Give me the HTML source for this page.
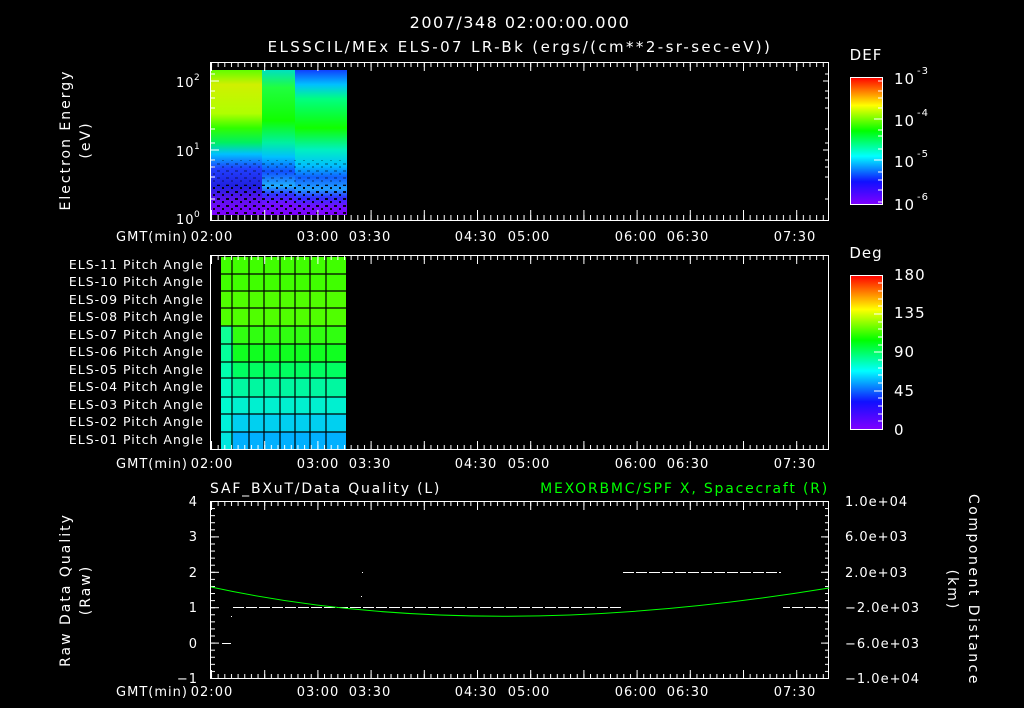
<!DOCTYPE html>
<html><head><meta charset="utf-8"><style>
html,body{margin:0;padding:0;background:#000;width:1024px;height:708px;overflow:hidden}
svg{display:block}
text{font-family:"DejaVu Sans","Liberation Sans",sans-serif;fill:#fff;letter-spacing:1px}
</style></head><body>
<svg width="1024" height="708" viewBox="0 0 1024 708" xmlns="http://www.w3.org/2000/svg">
<defs>
<linearGradient id="cb" x1="0" y1="1" x2="0" y2="0">
<stop offset="0" stop-color="#8000ff"/><stop offset="0.18" stop-color="#1010ff"/><stop offset="0.38" stop-color="#00ffff"/><stop offset="0.58" stop-color="#00ff00"/><stop offset="0.78" stop-color="#ffff00"/><stop offset="1" stop-color="#ff0000"/>
</linearGradient>
<linearGradient id="spA" x1="0" y1="0" x2="0" y2="1">
<stop offset="0" stop-color="#60ff00"/><stop offset="0.1" stop-color="#d0f000"/><stop offset="0.3" stop-color="#b0ff00"/><stop offset="0.4" stop-color="#30ff00"/><stop offset="0.5" stop-color="#00f060"/><stop offset="0.58" stop-color="#00c0ff"/><stop offset="0.68" stop-color="#2040ff"/><stop offset="0.8" stop-color="#2020e0"/><stop offset="0.9" stop-color="#6010f0"/><stop offset="1" stop-color="#8000ff"/>
</linearGradient>
<linearGradient id="spB" x1="0" y1="0" x2="0" y2="1">
<stop offset="0" stop-color="#00e0c0"/><stop offset="0.12" stop-color="#20ff40"/><stop offset="0.35" stop-color="#10ff00"/><stop offset="0.5" stop-color="#00f0a0"/><stop offset="0.6" stop-color="#00c0ff"/><stop offset="0.7" stop-color="#1050ff"/><stop offset="0.8" stop-color="#20b0ff"/><stop offset="0.86" stop-color="#3030ff"/><stop offset="0.92" stop-color="#7010ff"/><stop offset="1" stop-color="#8000ff"/>
</linearGradient>
<linearGradient id="spC" x1="0" y1="0" x2="0" y2="1">
<stop offset="0" stop-color="#1040ff"/><stop offset="0.1" stop-color="#00c0ff"/><stop offset="0.2" stop-color="#00ff80"/><stop offset="0.4" stop-color="#10ff00"/><stop offset="0.55" stop-color="#00f0c0"/><stop offset="0.66" stop-color="#00c0ff"/><stop offset="0.74" stop-color="#1060ff"/><stop offset="0.82" stop-color="#20a0ff"/><stop offset="0.88" stop-color="#3030ff"/><stop offset="0.94" stop-color="#7010ff"/><stop offset="1" stop-color="#8000ff"/>
</linearGradient>
<pattern id="tk" x="211" y="0" width="6.65" height="10" patternUnits="userSpaceOnUse"><rect x="0" y="0" width="1" height="10" fill="#fff"/></pattern>
<pattern id="tkM" x="211" y="0" width="53.2" height="10" patternUnits="userSpaceOnUse"><rect x="0" y="0" width="1" height="10" fill="#fff"/></pattern>
<pattern id="ty" x="0" y="501" width="10" height="7.08" patternUnits="userSpaceOnUse"><rect x="0" y="0" width="10" height="1" fill="#fff"/></pattern>
<pattern id="tyM" x="0" y="501" width="10" height="35.4" patternUnits="userSpaceOnUse"><rect x="0" y="0" width="10" height="1" fill="#fff"/></pattern>
<pattern id="ck" x="0" y="0" width="9" height="7" patternUnits="userSpaceOnUse"><rect x="1" y="2" width="3" height="2" fill="#000"/><rect x="6" y="5" width="2" height="2" fill="#000"/></pattern>
<pattern id="dash" x="233" y="0" width="13" height="1000" patternUnits="userSpaceOnUse"><rect x="0" y="0" width="11" height="1000" fill="#fff"/></pattern>
</defs>

<text x="520" y="28" font-size="16" text-anchor="middle" style="letter-spacing:1.5px">2007/348 02:00:00.000</text>
<text x="520" y="52" font-size="15" text-anchor="middle" style="letter-spacing:2.4px">ELSSCIL/MEx ELS-07 LR-Bk  (ergs/(cm**2-sr-sec-eV))</text>

<!-- Top panel -->
<rect x="211" y="70" width="51" height="145" fill="url(#spA)"/>
<rect x="262" y="70" width="33" height="145" fill="url(#spB)"/>
<rect x="295" y="70" width="52" height="145" fill="url(#spC)"/>
<rect x="211" y="185" width="136" height="30" fill="url(#ck)" opacity="0.9"/>
<rect x="211" y="160" width="136" height="25" fill="url(#ck)" opacity="0.3"/>
<rect x="210.5" y="62.5" width="618" height="158" fill="none" stroke="#fff"/>
<rect x="211" y="63" width="618" height="4" fill="url(#tk)"/>
<rect x="211" y="63" width="618" height="8" fill="url(#tkM)"/>
<rect x="211" y="215" width="618" height="5" fill="url(#tk)"/>
<rect x="211" y="210" width="618" height="10" fill="url(#tkM)"/>
<g stroke="#fff">
<path d="M211 81H219M211 150H219M823 81H829M823 150H829"/>
<path d="M211 91H215M211 98H215M211 108H215M211 129H215M211 160H215M211 167H215M211 177H215M211 199H215M211 74H215M211 143H215"/>
<path d="M825 91H829M825 98H829M825 108H829M825 129H829M825 160H829M825 167H829M825 177H829M825 199H829M825 74H829M825 143H829"/>
</g>
<text x="176" y="87" font-size="13">10</text><text x="194" y="80" font-size="9">2</text>
<text x="176" y="156" font-size="13">10</text><text x="194" y="149" font-size="9">1</text>
<text x="176" y="224" font-size="13">10</text><text x="194" y="217" font-size="9">0</text>
<text transform="translate(70,140) rotate(-90)" font-size="14" text-anchor="middle" style="letter-spacing:2px">Electron Energy</text>
<text transform="translate(90,140) rotate(-90)" font-size="14" text-anchor="middle" style="letter-spacing:2px">(eV)</text>

<g font-size="13" text-anchor="middle" style="letter-spacing:1.5px">
<text x="152" y="241">GMT(min)</text><text x="212" y="241">02:00</text><text x="318" y="241">03:00</text><text x="370" y="241">03:30</text><text x="476" y="241">04:30</text><text x="529" y="241">05:00</text><text x="636" y="241">06:00</text><text x="688" y="241">06:30</text><text x="795" y="241">07:30</text>
<text x="152" y="468">GMT(min)</text><text x="212" y="468">02:00</text><text x="318" y="468">03:00</text><text x="370" y="468">03:30</text><text x="476" y="468">04:30</text><text x="529" y="468">05:00</text><text x="636" y="468">06:00</text><text x="688" y="468">06:30</text><text x="795" y="468">07:30</text>
<text x="152" y="696">GMT(min)</text><text x="212" y="696">02:00</text><text x="318" y="696">03:00</text><text x="370" y="696">03:30</text><text x="476" y="696">04:30</text><text x="529" y="696">05:00</text><text x="636" y="696">06:00</text><text x="688" y="696">06:30</text><text x="795" y="696">07:30</text>
</g>

<!-- DEF colorbar -->
<text x="866" y="60" font-size="15" text-anchor="middle">DEF</text>
<rect x="850.5" y="77.5" width="32" height="127" fill="url(#cb)" stroke="#fff"/>
<g stroke="#fff"><path d="M878 81H882M878 91H882M878 98H882M878 108H882M874 119H882M878 130H882M878 136H882M878 149H882M874 160H882M878 172H882M878 180H882M878 190H882M878 202H882"/></g>
<g font-size="15"><text x="894" y="84">10</text><text x="917" y="74" font-size="10">-3</text>
<text x="894" y="126">10</text><text x="917" y="116" font-size="10">-4</text>
<text x="894" y="167">10</text><text x="917" y="157" font-size="10">-5</text>
<text x="894" y="210">10</text><text x="917" y="200" font-size="10">-6</text></g>

<!-- Middle panel -->
<g>
<rect x="221" y="257" width="125" height="192" fill="#40ff00"/>
<rect x="221" y="257" width="125" height="17" fill="#40ff00"/>
<rect x="221" y="274" width="125" height="17" fill="#40ff00"/>
<rect x="221" y="291" width="125" height="17" fill="#50ff00"/>
<rect x="221" y="308" width="125" height="18" fill="#50ff00"/>
<rect x="221" y="326" width="125" height="18" fill="#30ff10"/>
<rect x="221" y="344" width="125" height="18" fill="#10ff20"/>
<rect x="221" y="362" width="125" height="16" fill="#00ff60"/>
<rect x="221" y="378" width="125" height="19" fill="#00f8a0"/>
<rect x="221" y="397" width="125" height="17" fill="#00f0d0"/>
<rect x="221" y="414" width="125" height="18" fill="#00d0f0"/>
<rect x="221" y="432" width="125" height="17" fill="#00b0ff"/>
<rect x="221" y="326" width="12" height="123" fill="#00ffd0" opacity="0.7"/>
<g stroke="#000" stroke-width="1.2">
<path d="M232 257V449M249 257V449M264 257V449M280 257V449M295 257V449M310 257V449M326 257V449"/>
<path d="M221 274H346M221 291H346M221 308H346M221 326H346M221 344H346M221 362H346M221 378H346M221 397H346M221 414H346M221 432H346"/>
</g>
</g>
<rect x="210.5" y="255.5" width="618" height="194" fill="none" stroke="#fff"/>
<rect x="211" y="256" width="618" height="4" fill="url(#tk)"/>
<rect x="211" y="256" width="618" height="8" fill="url(#tkM)"/>
<rect x="211" y="445" width="618" height="4" fill="url(#tk)"/>
<rect x="211" y="441" width="618" height="8" fill="url(#tkM)"/>
<g font-size="12.5" text-anchor="end" style="letter-spacing:1.3px">
<text x="204" y="269">ELS-11 Pitch Angle</text>
<text x="204" y="286">ELS-10 Pitch Angle</text>
<text x="204" y="304">ELS-09 Pitch Angle</text>
<text x="204" y="321">ELS-08 Pitch Angle</text>
<text x="204" y="339">ELS-07 Pitch Angle</text>
<text x="204" y="356">ELS-06 Pitch Angle</text>
<text x="204" y="374">ELS-05 Pitch Angle</text>
<text x="204" y="391">ELS-04 Pitch Angle</text>
<text x="204" y="409">ELS-03 Pitch Angle</text>
<text x="204" y="426">ELS-02 Pitch Angle</text>
<text x="204" y="444">ELS-01 Pitch Angle</text>
</g>

<!-- Deg colorbar -->
<text x="866" y="258" font-size="15" text-anchor="middle">Deg</text>
<rect x="850.5" y="275.5" width="32" height="154" fill="url(#cb)" stroke="#fff"/>
<g stroke="#fff"><path d="M878 283H882M878 291H882M878 299H882M878 306H882M874 314H882M878 322H882M878 329H882M878 337H882M878 345H882M874 352H882M878 360H882M878 368H882M878 375H882M878 383H882M874 391H882M878 398H882M878 406H882M878 414H882M878 421H882"/></g>
<g font-size="15"><text x="894" y="280">180</text><text x="894" y="318">135</text><text x="894" y="357">90</text><text x="894" y="396">45</text><text x="894" y="435">0</text></g>

<!-- Bottom panel -->
<text x="210" y="493" font-size="14" style="letter-spacing:1.8px">SAF_BXuT/Data Quality (L)</text>
<text x="829" y="493" font-size="14" text-anchor="end" style="fill:#00ff00;letter-spacing:1.8px">MEXORBMC/SPF X, Spacecraft (R)</text>
<rect x="210.5" y="501.5" width="618" height="177" fill="none" stroke="#fff"/>
<rect x="211" y="502" width="618" height="4" fill="url(#tk)"/>
<rect x="211" y="502" width="618" height="8" fill="url(#tkM)"/>
<rect x="211" y="674" width="618" height="4" fill="url(#tk)"/>
<rect x="211" y="670" width="618" height="8" fill="url(#tkM)"/>
<rect x="211" y="501" width="4" height="177" fill="url(#ty)"/>
<rect x="211" y="501" width="8" height="177" fill="url(#tyM)"/>
<rect x="825" y="501" width="4" height="177" fill="url(#ty)"/>
<rect x="821" y="501" width="8" height="177" fill="url(#tyM)"/>
<g font-size="13" text-anchor="end"><text x="198" y="506">4</text><text x="198" y="541">3</text><text x="198" y="577">2</text><text x="198" y="612">1</text><text x="198" y="648">0</text><text x="198" y="683">−1</text></g>
<g font-size="13"><text x="845" y="506">1.0e+04</text><text x="845" y="541">6.0e+03</text><text x="845" y="577">2.0e+03</text><text x="845" y="612">−2.0e+03</text><text x="845" y="648">−6.0e+03</text><text x="845" y="683">−1.0e+04</text></g>
<text transform="translate(70,590) rotate(-90)" font-size="14" text-anchor="middle" style="letter-spacing:2px">Raw Data Quality</text>
<text transform="translate(90,590) rotate(-90)" font-size="14" text-anchor="middle" style="letter-spacing:2px">(Raw)</text>
<text transform="translate(969,590) rotate(90)" font-size="14" text-anchor="middle" style="letter-spacing:2.5px">Component Distance</text>
<text transform="translate(948,590) rotate(90)" font-size="14" text-anchor="middle" style="letter-spacing:2px">(km)</text>
<rect x="233" y="607" width="389" height="1" fill="url(#dash)"/>
<rect x="623" y="572" width="158" height="1" fill="url(#dash)"/>
<rect x="783" y="607" width="38" height="1" fill="url(#dash)"/>
<rect x="222" y="643" width="9" height="1" fill="#fff"/>
<rect x="231" y="616" width="1" height="1" fill="#fff"/>
<rect x="362" y="572" width="1" height="1" fill="#fff"/>
<rect x="361" y="596" width="1" height="1" fill="#fff"/>
<path d="M211 587Q480 645 829 588" fill="none" stroke="#00ff00" stroke-width="1"/>
</svg>
</body></html>
